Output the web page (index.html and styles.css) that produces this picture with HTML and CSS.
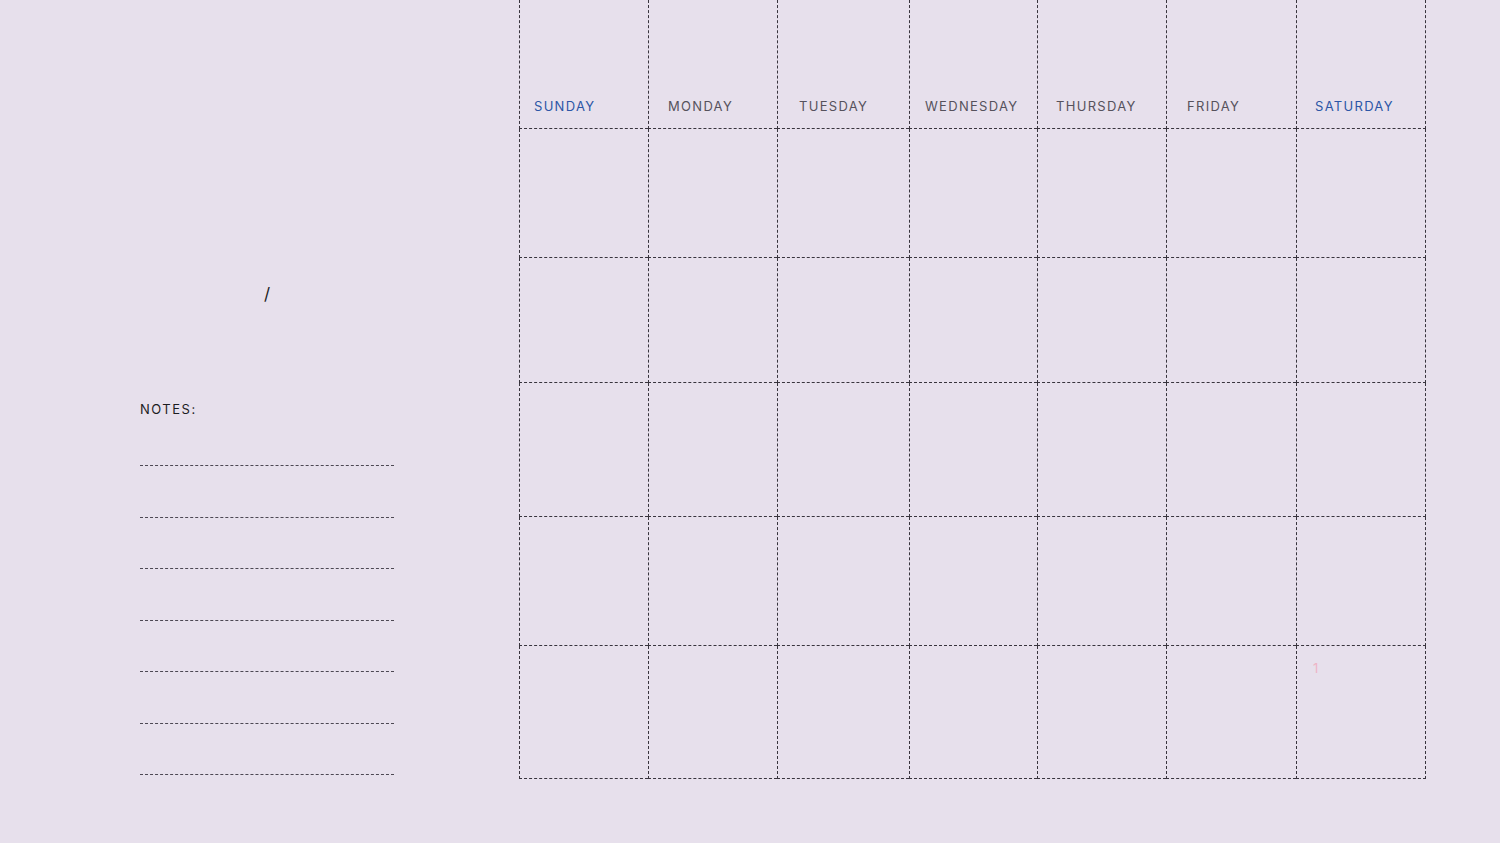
FILE: index.html
```html
<!DOCTYPE html>
<html lang="en">
<head>
<meta charset="utf-8">
<title>Monthly Calendar</title>
<link rel="stylesheet" href="styles.css">
</head>
<body>
<div class="page">
  <aside class="side">
    <div class="date-slot">/</div>
    <div class="notes-title">NOTES:</div>
    <div class="note-lines">
      <div class="note-line"></div>
      <div class="note-line"></div>
      <div class="note-line"></div>
      <div class="note-line"></div>
      <div class="note-line"></div>
      <div class="note-line"></div>
      <div class="note-line"></div>
    </div>
  </aside>
  <main class="calendar">
    <div class="cell head weekend p15">SUNDAY</div>
    <div class="cell head p20">MONDAY</div>
    <div class="cell head p22">TUESDAY</div>
    <div class="cell head p16">WEDNESDAY</div>
    <div class="cell head p19">THURSDAY</div>
    <div class="cell head p21">FRIDAY</div>
    <div class="cell head weekend p19 last">SATURDAY</div>

    <div class="cell"></div><div class="cell"></div><div class="cell"></div><div class="cell"></div><div class="cell"></div><div class="cell"></div><div class="cell last"></div>
    <div class="cell"></div><div class="cell"></div><div class="cell"></div><div class="cell"></div><div class="cell"></div><div class="cell"></div><div class="cell last"></div>
    <div class="cell"></div><div class="cell"></div><div class="cell"></div><div class="cell"></div><div class="cell"></div><div class="cell"></div><div class="cell last"></div>
    <div class="cell"></div><div class="cell"></div><div class="cell"></div><div class="cell"></div><div class="cell"></div><div class="cell"></div><div class="cell last"></div>
    <div class="cell"></div><div class="cell"></div><div class="cell"></div><div class="cell"></div><div class="cell"></div><div class="cell"></div><div class="cell last"><span class="day-num">1</span></div>
  </main>
</div>
</body>
</html>
```

FILE: styles.css
```css
* { box-sizing: border-box; }

html, body {
  margin: 0;
  padding: 0;
  background: #e7e0ec;
  font-family: "Inter", "Lato", "Liberation Sans", sans-serif;
}

.page {
  width: 1500px;
  height: 843px;
  display: flex;
  overflow: hidden;
}

.side {
  width: 519px;
  padding-left: 140px;
  padding-top: 283px;
  display: flex;
  flex-direction: column;
}

.date-slot {
  width: 254px;
  text-align: center;
  font-size: 17px;
  line-height: 22px;
  color: #1d1d1f;
}

.notes-title {
  margin-top: 96px;
  font-size: 13px;
  line-height: 16px;
  letter-spacing: 1.5px;
  color: #1d1d1f;
}

.note-lines {
  margin-top: 48px;
  width: 254px;
  display: flex;
  flex-direction: column;
  gap: 50.5px;
}

.note-line {
  height: 1px;
  border-bottom: 1px dashed #4d4853;
}

.calendar {
  display: grid;
  grid-template-columns: 129px 129px 132px 128px 129px 130px 130px;
  grid-template-rows: 129px 129px 125px 134px 129px 133px;
  align-self: flex-start;
}

.cell {
  border-left: 1px dashed #38343d;
  border-bottom: 1px dashed #38343d;
  position: relative;
}

.cell.last {
  border-right: 1px dashed #38343d;
}

.head {
  display: flex;
  align-items: flex-end;
  padding-bottom: 14px;
  font-size: 13px;
  line-height: 16px;
  letter-spacing: 1.3px;
  color: #56525c;
}

.head.weekend {
  color: #2c56a6;
}

.p15 { padding-left: 14px; }
.p16 { padding-left: 15px; }
.p19 { padding-left: 18px; }
.p20 { padding-left: 19px; }
.p21 { padding-left: 20px; }
.p22 { padding-left: 21px; }

.day-num {
  display: block;
  padding: 14px 0 0 16px;
  font-size: 13px;
  line-height: 16px;
  color: #eeb4c6;
}
```
